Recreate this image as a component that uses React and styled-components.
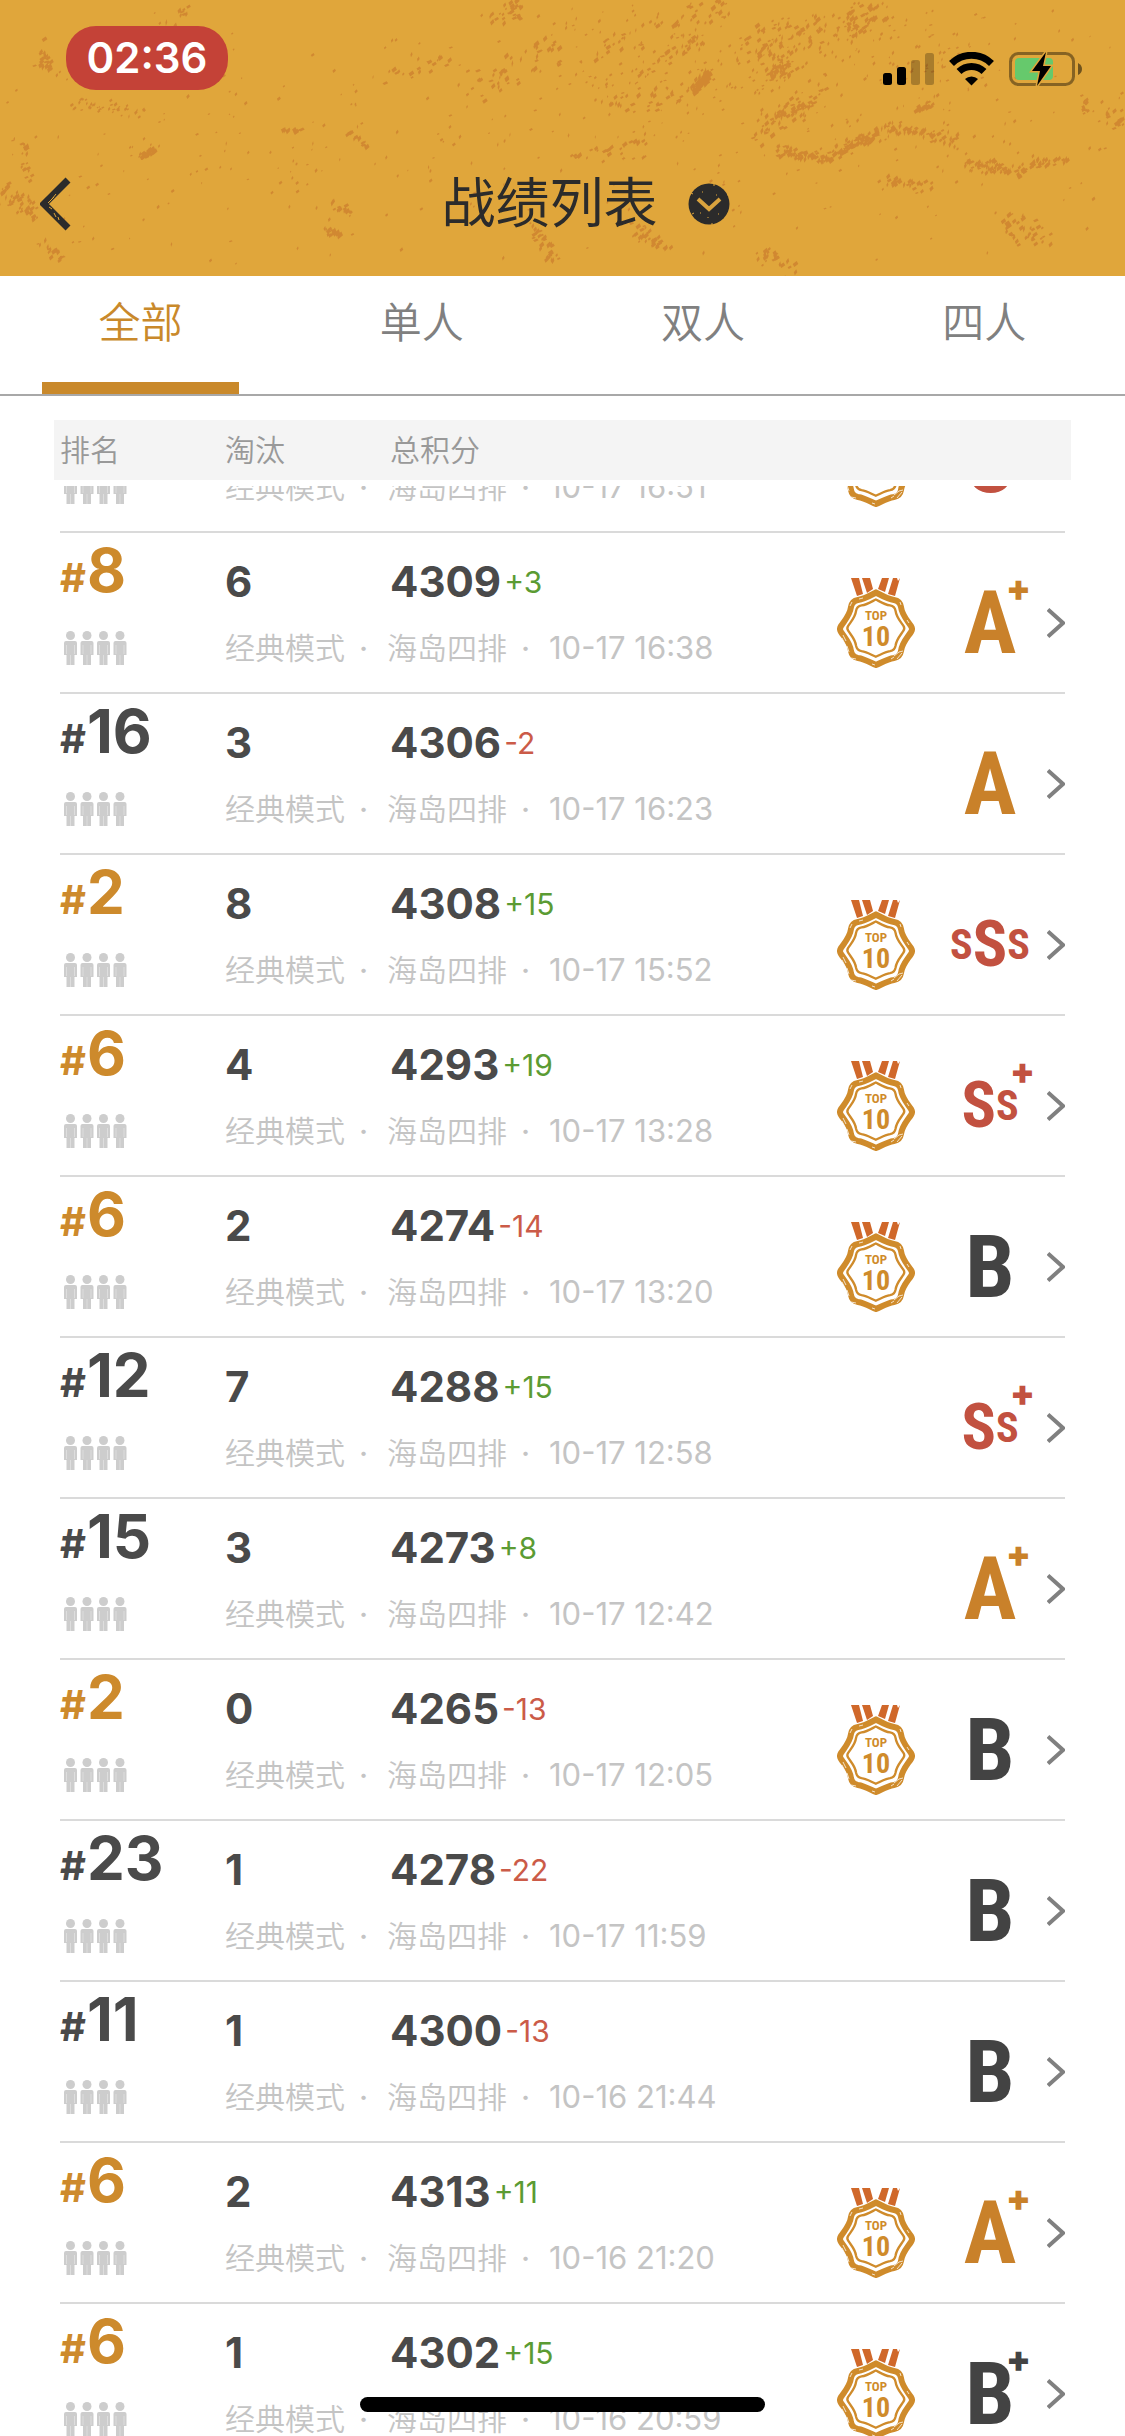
import { useLayoutEffect, useRef, useState } from 'react';
import styled, { createGlobalStyle } from 'styled-components';

const MATCHES = [
    { rank: 5, kills: 5, score: 4306, delta: 12, time: '10-17 16:51', grade: 'S' },
    { rank: 8, kills: 6, score: 4309, delta: 3, time: '10-17 16:38', grade: 'A+' },
    { rank: 16, kills: 3, score: 4306, delta: -2, time: '10-17 16:23', grade: 'A' },
    { rank: 2, kills: 8, score: 4308, delta: 15, time: '10-17 15:52', grade: 'sSs' },
    { rank: 6, kills: 4, score: 4293, delta: 19, time: '10-17 13:28', grade: 'Ss+' },
    { rank: 6, kills: 2, score: 4274, delta: -14, time: '10-17 13:20', grade: 'B' },
    { rank: 12, kills: 7, score: 4288, delta: 15, time: '10-17 12:58', grade: 'Ss+' },
    { rank: 15, kills: 3, score: 4273, delta: 8, time: '10-17 12:42', grade: 'A+' },
    { rank: 2, kills: 0, score: 4265, delta: -13, time: '10-17 12:05', grade: 'B' },
    { rank: 23, kills: 1, score: 4278, delta: -22, time: '10-17 11:59', grade: 'B' },
    { rank: 11, kills: 1, score: 4300, delta: -13, time: '10-16 21:44', grade: 'B' },
    { rank: 6, kills: 2, score: 4313, delta: 11, time: '10-16 21:20', grade: 'A+' },
    { rank: 6, kills: 1, score: 4302, delta: 15, time: '10-16 20:59', grade: 'B+' },
];

const TABS = ['全部', '单人', '双人', '四人'];

const GRADE_COLORS = { A: '#c9812a', B: '#434343', S: '#c25140' };

// [x1, y1, x2, y2, spread, count, size] - streaks of worn paint on the header
const STREAKS = [
    [470, 90, 560, 40, 20, 46, 3],
    [380, 75, 450, 55, 12, 22, 3],
    [490, 20, 520, 8, 12, 30, 3],
    [600, 50, 740, 0, 16, 50, 3],
    [640, 70, 700, 40, 14, 30, 3],
    [740, 50, 880, 15, 22, 130, 3],
    [765, 75, 790, 65, 12, 46, 3],
    [692, 90, 706, 74, 6, 50, 4],
    [600, 110, 700, 95, 14, 30, 3],
    [780, 115, 820, 95, 14, 40, 3],
    [755, 135, 790, 110, 12, 30, 3],
    [775, 150, 830, 160, 7, 70, 3],
    [830, 155, 880, 132, 8, 70, 3],
    [885, 126, 960, 142, 8, 56, 3],
    [960, 162, 1020, 172, 8, 56, 3],
    [1020, 166, 1065, 160, 5, 30, 3],
    [880, 182, 930, 186, 7, 28, 3],
    [915, 110, 930, 104, 4, 22, 3],
    [1000, 222, 1050, 240, 18, 36, 3],
    [560, 158, 650, 138, 8, 24, 3],
    [630, 230, 670, 248, 10, 34, 3],
    [530, 230, 556, 262, 10, 30, 3],
    [760, 250, 790, 272, 14, 24, 3],
    [70, 105, 145, 112, 12, 36, 2],
    [35, 50, 60, 75, 18, 22, 3],
    [140, 157, 152, 150, 4, 26, 3],
    [5, 190, 30, 215, 18, 46, 3],
    [20, 140, 28, 186, 7, 18, 3],
    [280, 130, 298, 131, 2, 14, 3],
    [345, 132, 365, 146, 4, 14, 3],
    [325, 204, 350, 212, 6, 14, 3],
    [325, 230, 340, 236, 5, 20, 3],
    [40, 240, 60, 262, 6, 14, 3],
    [160, 30, 190, 4, 10, 12, 3],
    [1080, 105, 1125, 120, 14, 26, 3],
    [0, 138, 1125, 138, 138, 420, 2],
    [560, 60, 1000, 60, 60, 220, 2],
];

function buildGrunge() {
    let seed = 7;
    const rnd = () => {
        seed = (seed * 16807) % 2147483647;
        return seed / 2147483647;
    };
    let d = '';
    STREAKS.forEach(([x1, y1, x2, y2, spread, count, size]) => {
        for (let i = 0; i < count; i++) {
            const t = rnd();
            const x = x1 + (x2 - x1) * t + (rnd() - 0.5) * spread;
            const y = y1 + (y2 - y1) * t + (rnd() + rnd() - 1) * spread;
            const w = size * (0.4 + rnd());
            const h = size * (0.4 + rnd() * 0.8);
            d += `M${x.toFixed(1)} ${y.toFixed(1)}l${w.toFixed(1)} ${(-h).toFixed(1)}l${(w * 0.4).toFixed(1)} ${h.toFixed(1)}l${(-w).toFixed(1)} ${h.toFixed(1)}z`;
        }
    });
    return d;
}

const GRUNGE = buildGrunge();

const MEDAL_RING = 'M39 14.5C44 17 50 21 57 22Q63 23 64 29C65 37 70 42 74 48Q76 51 74 54C70 60 65 65 64 73Q63 79 57 80C50 81 44 85 39 87C34 85 28 81 21 80Q15 79 14 73C13 65 8 60 4 54Q2 51 4 48C8 42 13 37 14 29Q15 23 21 22C28 21 34 17 39 14.5Z';

function Medal() {
    return (
        <MedalIcon viewBox="0 0 78 90" role="img" aria-label="TOP 10">
            <g fill="#d0682a">
                <path d="M14 0h8l4 16-6 2z" />
                <path d="M25 0h8l3 11-6 4z" />
                <path d="M45 0h7l-4 14-7-3z" />
                <path d="M56 0h4l1 3 2-3-5 18-7-2z" />
            </g>
            <path d={MEDAL_RING} fill="none" stroke="#cf8b2b" strokeWidth="6" />
            <path d={MEDAL_RING} fill="none" stroke="#cf8b2b" strokeWidth="3" transform="translate(8 10) scale(.79)" />
            <path
                d="M6 57l3 6M5 60l5 10M10 68l2 6M57 78l5-4M60 81l5-6M54 81l3-2M66 73l-4 1M14 80l5 1M13 28l2-4M22 21l4-1M64 27l-1-3M35 86l3 1M72 45l-2-3"
                stroke="#fff"
                strokeWidth="1"
                opacity=".75"
            />
            <MedalText x="39" y="42" $size={13}>TOP</MedalText>
            <MedalText x="39" y="68" $size={28}>10</MedalText>
        </MedalIcon>
    );
}

function Squad() {
    return (
        <SquadIcon viewBox="0 0 64 34" role="img" aria-label="四人">
            {[0, 1, 2, 3].map((i) => (
                <g key={i} transform={`translate(${i * 16.5} 0)`}>
                    <circle cx="6.5" cy="4.5" r="4.500" />
                    <path d="M2 10h9q2 0 2 2v12h-2.500v10h-8v-10h-2.500v-12q0-2 2-2z" />
                    <path d="M2.500 14v9M10.500 14v9M6.500 24v10" stroke="#fff" strokeWidth="1" opacity=".35" />
                </g>
            ))}
        </SquadIcon>
    );
}

function Grade({ value }) {
    const plus = value.endsWith('+');
    const letters = value.replace('+', '').split('');
    const color = GRADE_COLORS[letters[0].toUpperCase()];

    return (
        <GradeBox $color={color}>
            {letters.map((letter, i) => (
                <GradeLetter key={i} $small={letter === 's'} $tight={letters.length > 1}>
                    {letter.toUpperCase()}
                </GradeLetter>
            ))}
            {plus && <GradePlus $wide={letters.length > 1}>+</GradePlus>}
        </GradeBox>
    );
}

function MatchRow({ match }) {
    const gain = match.delta > 0;

    return (
        <li>
            <RowLink href="#detail">
                <Rank $top={match.rank <= 10}>
                    <Hash>#</Hash>{match.rank}
                </Rank>
                <Kills>{match.kills}</Kills>
                <Score>
                    {match.score}
                    <Delta $gain={gain}>{gain ? `+${match.delta}` : match.delta}</Delta>
                </Score>
                <Squad />
                <Meta>
                    <span>经典模式</span>
                    <Dot>·</Dot>
                    <span>海岛四排</span>
                    <Dot>·</Dot>
                    <Time>{match.time}</Time>
                </Meta>
                <Awards>
                    {match.rank <= 10 && <Medal />}
                    <Grade value={match.grade} />
                    <Chevron viewBox="0 0 18 30" aria-hidden="true">
                        <path d="M1 1.500L16 15 1 28.500" />
                    </Chevron>
                </Awards>
            </RowLink>
        </li>
    );
}

function App() {
    const [tab, setTab] = useState(0);
    const list = useRef(null);

    useLayoutEffect(() => {
        list.current.scrollTop = 114;
    }, []);

    return (
        <Screen>
            <GlobalStyle />
            <Header>
                <Grunge viewBox="0 0 1125 276" preserveAspectRatio="xMidYMid slice" aria-hidden="true">
                    <path d={GRUNGE} />
                </Grunge>
                <StatusBar>
                    <Clock>02:36</Clock>
                    <StatusIcons>
                        <svg width="51" height="34" viewBox="0 0 51 34" aria-hidden="true">
                            <rect x="0" y="21" width="9" height="12" rx="2.500" />
                            <rect x="14" y="15" width="9" height="18" rx="2.500" />
                            <rect x="28" y="8" width="9" height="25" rx="2.500" opacity=".25" />
                            <rect x="42" y="1" width="9" height="32" rx="2.500" opacity=".25" />
                        </svg>
                        <svg width="45" height="34" viewBox="0 0 45 34" aria-hidden="true">
                            <path d="M2.500 11.500a28.500 28.500 0 0 1 40 0" fill="none" stroke="#000" strokeWidth="7" />
                            <path d="M10 19.500a18 18 0 0 1 25 0" fill="none" stroke="#000" strokeWidth="7" />
                            <path d="M16 27a9.500 9.500 0 0 1 13 0l-6.500 6.500z" />
                        </svg>
                        <svg width="74" height="34" viewBox="0 0 74 34" aria-hidden="true">
                            <rect x="1.500" y="1.500" width="63" height="31" rx="8" fill="none" stroke="#000" strokeWidth="3" opacity=".4" />
                            <path d="M69 11q4 2 4 6t-4 6z" opacity=".5" />
                            <rect x="6" y="6" width="38" height="22" rx="4" fill="#66c96c" />
                            <path d="M37 0L23 19h8l-3 15 14-20h-8z" stroke="#e0a63b" strokeWidth="3" paintOrder="stroke" />
                        </svg>
                    </StatusIcons>
                </StatusBar>
                <NavBar>
                    <BackButton type="button" aria-label="返回">
                        <svg width="32" height="54" viewBox="0 0 32 54" aria-hidden="true">
                            <path d="M28 3L4 27l24 24" fill="none" stroke="#2b2b2b" strokeWidth="7" />
                            <path d="M8 26l6-6M9 30l3 2M14 36l2 4M18 40l1 3M12 22l4-5" stroke="#e0a63b" strokeWidth="1" />
                        </svg>
                    </BackButton>
                    <TitleButton type="button">
                        战绩列表
                        <svg width="42" height="42" viewBox="0 0 42 42" aria-hidden="true">
                            <circle cx="21" cy="21" r="20.500" fill="#2b2b2b" />
                            <path d="M10 16l11 10 11-10" fill="none" stroke="#d9a33e" strokeWidth="4" />
                            <path d="M26 0v3M3 10l2 1M39 12l2-1M14 9h1M28 12h1M12 30h1M30 31h1M20 34v1M24 42v-2M4 31l2-1" stroke="#e0a63b" />
                        </svg>
                    </TitleButton>
                </NavBar>
            </Header>
            <Tabs role="tablist">
                {TABS.map((name, i) => (
                    <Tab key={name} type="button" role="tab" aria-selected={i === tab} $active={i === tab} onClick={() => setTab(i)}>
                        {name}
                    </Tab>
                ))}
            </Tabs>
            <Columns>
                <span>排名</span>
                <span>淘汰</span>
                <span>总积分</span>
            </Columns>
            <MatchList ref={list}>
                {MATCHES.map((match) => (
                    <MatchRow key={match.time} match={match} />
                ))}
            </MatchList>
            <HomeIndicator />
        </Screen>
    );
}

export default App;

const GlobalStyle = createGlobalStyle`
    * {
        box-sizing: border-box;
    }

    body {
        margin: 0;
        background: #fff;
        font-family: Inter, "Noto Sans CJK SC", sans-serif;
    }

    button {
        padding: 0;
        border: 0;
        background: none;
        font: inherit;
        cursor: pointer;
    }
`

const Screen = styled.main`
    height: 100vh;
    display: flex;
    flex-direction: column;
    overflow: hidden;
`

const Header = styled.header`
    position: relative;
    flex: none;
    background: #e0a63b;
    padding: 26px 42px 36px 40px;
`

const Grunge = styled.svg`
    position: absolute;
    inset: 0;
    width: 100%;
    height: 100%;
    fill: #c5702a;
    opacity: 0.55;
`

const StatusBar = styled.div`
    position: relative;
    display: flex;
    justify-content: space-between;
    padding-left: 26px;
`

const Clock = styled.div`
    width: 162px;
    border-radius: 30px;
    background: #c44237;
    color: #fff;
    font-size: 42px;
    font-weight: 600;
    line-height: 64px;
    text-align: center;
`

const StatusIcons = styled.div`
    display: flex;
    gap: 15px;
    padding-top: 26px;
`

const NavBar = styled.nav`
    position: relative;
    display: grid;
    grid-template-columns: 60px 1fr 12px;
    align-items: center;
    margin-top: 78px;
`

const BackButton = styled.button`
    display: flex;
`

const TitleButton = styled.button`
    display: flex;
    align-items: center;
    justify-content: center;
    gap: 30px;
    color: #2b2b2b;
    font-size: 54px;
    line-height: 72px;
`

const Tabs = styled.div`
    flex: none;
    display: flex;
    border-bottom: 2px solid #a8a8a8;
`

const Tab = styled.button`
    flex: 1;
    color: ${({ $active }) => ($active ? '#c9892b' : '#808080')};
    font-size: 42px;
    font-weight: 350;
    line-height: 94px;

    &:after {
        content: "";
        display: block;
        width: 70%;
        height: 12px;
        margin: 12px auto 0;
        background: ${({ $active }) => ($active ? '#c9892b' : 'transparent')};
    }
`

const Columns = styled.div`
    flex: none;
    display: grid;
    grid-template-columns: 165px 165px 1fr;
    margin: 24px 54px 6px;
    padding: 0 6px;
    background: #f4f4f4;
    color: #999;
    font-size: 30px;
    font-weight: 350;
    line-height: 60px;
`

const MatchList = styled.ul`
    flex: 1;
    min-height: 0;
    margin: 0;
    padding: 0 60px;
    overflow-y: auto;
    scrollbar-width: none;
    list-style: none;
`

const RowLink = styled.a`
    display: grid;
    grid-template-columns: 165px 165px 1fr auto;
    grid-template-rows: 98px 37px;
    padding-bottom: 24px;
    border-bottom: 2px solid #dadada;
    color: #4a4a4a;
    text-decoration: none;
`

const Rank = styled.strong`
    color: ${({ $top }) => ($top ? '#cd8a2c' : '#4a4a4a')};
    font-size: 60px;
    font-weight: 700;
    line-height: 74px;
`

const Hash = styled.span`
    padding-right: 1px;
    font-size: 40px;
`

const Kills = styled.strong`
    font-size: 42px;
    line-height: 98px;
`

const Score = styled.strong`
    display: flex;
    font-size: 42px;
    line-height: 98px;
`

const Delta = styled.span`
    padding-left: 3px;
    color: ${({ $gain }) => ($gain ? '#5b9b33' : '#cb5b48')};
    font-size: 30px;
    font-weight: 400;
`

const SquadIcon = styled.svg`
    grid-row: 2;
    width: 64px;
    height: 34px;
    margin-left: 4px;
    fill: #cdcdcd;
`

const Meta = styled.div`
    grid-row: 2;
    grid-column: 2 / 4;
    display: flex;
    color: #c4c4c4;
    font-size: 30px;
    font-weight: 350;
    line-height: 34px;
`

const Dot = styled.span`
    width: 42px;
    padding-left: 14px;
    font-weight: 500;
`

const Time = styled.time`
    font-size: 31px;
    font-weight: 400;
`

const Awards = styled.div`
    grid-row: 1 / 3;
    grid-column: 4;
    display: flex;
    align-items: center;
    align-self: end;
    height: 90px;
`

const MedalIcon = styled.svg`
    width: 78px;
    height: 90px;
    margin-right: 30px;
`

const MedalText = styled.text`
    fill: #cf8b2b;
    font-family: "Roboto Condensed", "DejaVu Sans Condensed", sans-serif;
    font-size: ${({ $size }) => $size}px;
    font-weight: 700;
    text-anchor: middle;
`

const GradeBox = styled.span`
    position: relative;
    display: flex;
    align-items: center;
    justify-content: center;
    width: 90px;
    height: 90px;
    color: ${({ $color }) => $color};
    font-family: "Roboto Condensed", "DejaVu Sans Condensed", sans-serif;
    font-weight: 700;
`

const GradeLetter = styled.span`
    font-size: ${({ $small, $tight }) => ($small ? 42 : $tight ? 64 : 88)}px;
    line-height: 90px;
`

const GradePlus = styled.sup`
    position: absolute;
    top: 0;
    right: ${({ $wide }) => ($wide ? 0 : 4)}px;
    font-family: Inter, sans-serif;
    font-size: 36px;
    font-weight: 900;
    line-height: 20px;
`

const Chevron = styled.svg`
    width: 18px;
    height: 30px;
    margin-left: 12px;
    fill: none;
    stroke: #808080;
    stroke-width: 4;
`

const HomeIndicator = styled.div`
    position: fixed;
    bottom: 24px;
    left: 32%;
    right: 32%;
    height: 15px;
    border-radius: 8px;
    background: #000;
`
